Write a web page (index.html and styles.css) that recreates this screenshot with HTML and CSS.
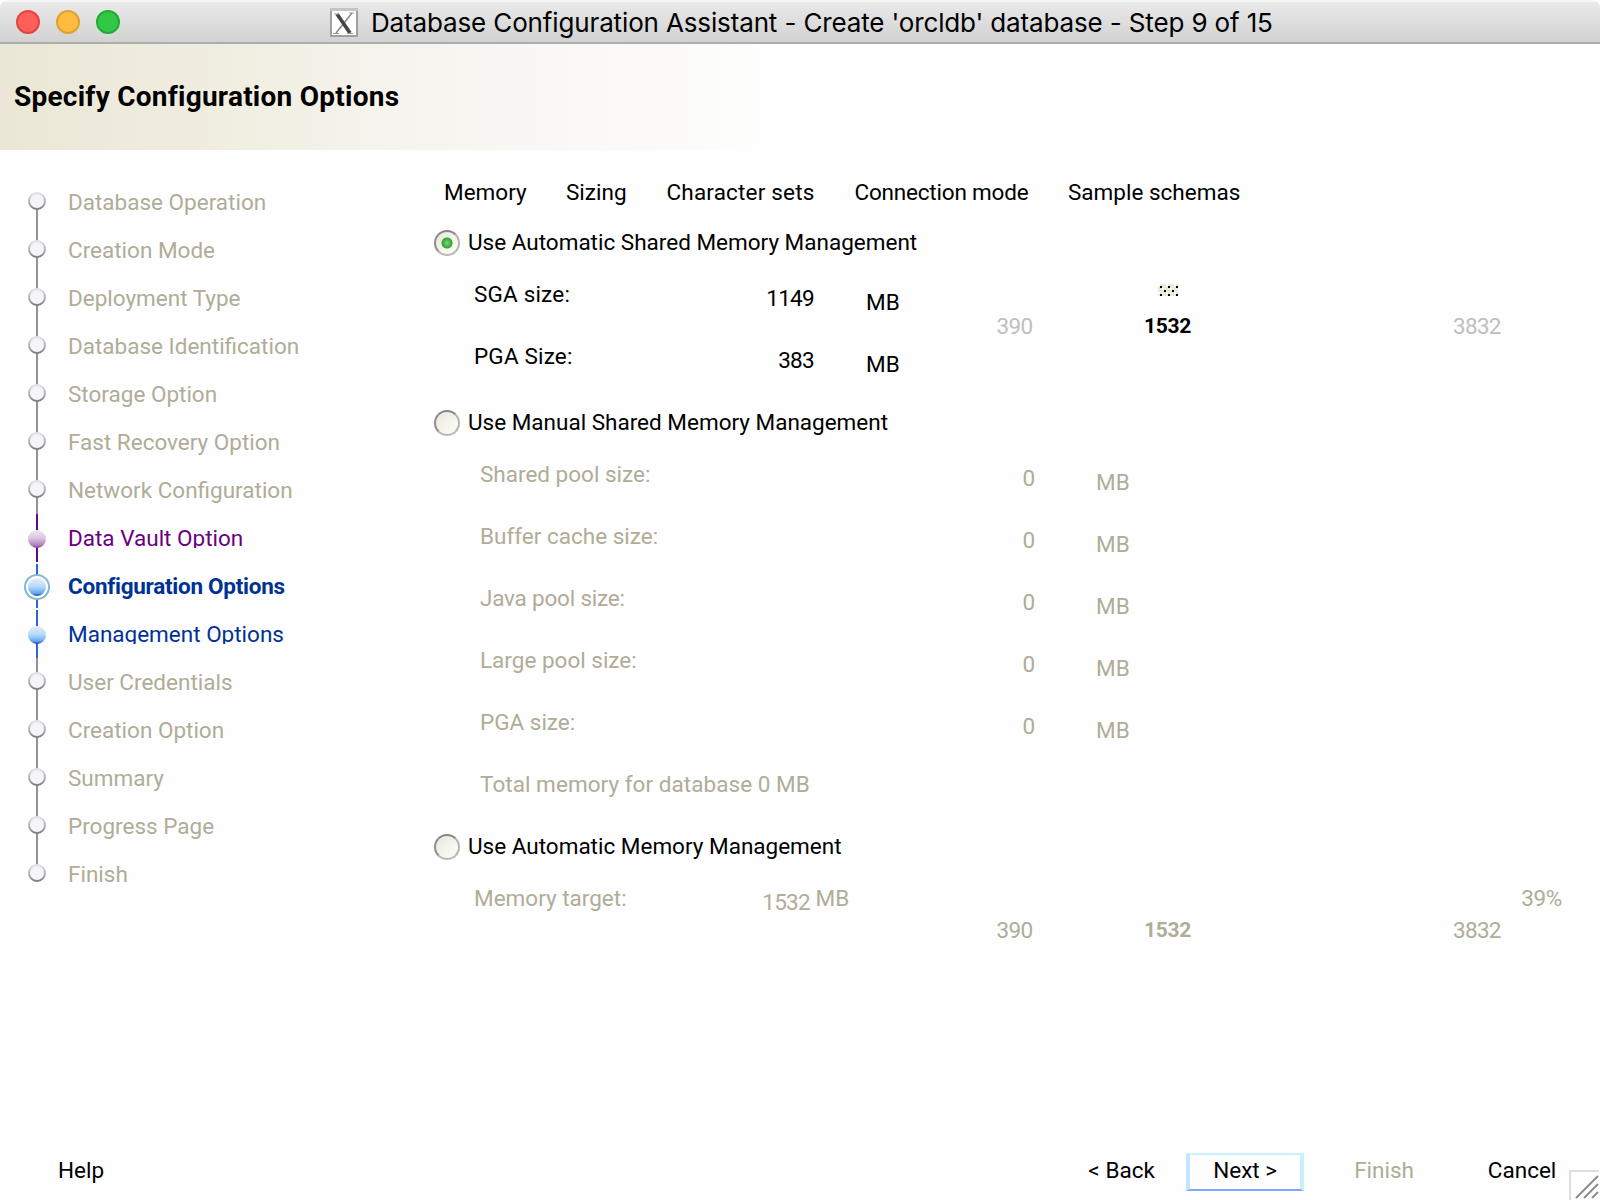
FILE: index.html
```html
<!DOCTYPE html>
<html lang="en">
<head>
<meta charset="utf-8">
<title>Database Configuration Assistant</title>
<link rel="stylesheet" href="styles.css">
</head>
<body>
<svg class="defs" aria-hidden="true">
  <defs>
    <linearGradient id="g-gray" x1="0" y1="0" x2="0" y2="1"><stop offset="0" stop-color="#e2e2e2"/><stop offset=".5" stop-color="#b8b8ba"/><stop offset="1" stop-color="#808085"/></linearGradient>
    <linearGradient id="g-purple" x1="0" y1="0" x2="0" y2="1"><stop offset="0" stop-color="#efe8f1"/><stop offset=".45" stop-color="#dcc6e0"/><stop offset=".85" stop-color="#b07cba"/><stop offset="1" stop-color="#6a4080"/></linearGradient>
    <linearGradient id="g-blue" x1="0" y1="0" x2="0" y2="1"><stop offset="0" stop-color="#e4effb"/><stop offset=".5" stop-color="#b4d8f8"/><stop offset=".85" stop-color="#5ea6f0"/><stop offset="1" stop-color="#1c3c9c"/></linearGradient>
    <symbol id="n-gray" viewBox="0 0 28 48"><circle cx="14" cy="24" r="8" fill="#f3f5f8" stroke="url(#g-gray)" stroke-width="2"/></symbol>
    <symbol id="n-purple" viewBox="0 0 28 48"><circle cx="14" cy="26" r="9" fill="url(#g-purple)"/></symbol>
    <symbol id="n-blue" viewBox="0 0 28 48"><circle cx="14" cy="26" r="9" fill="url(#g-blue)"/></symbol>
    <symbol id="n-active" viewBox="0 0 28 48"><circle cx="14" cy="26" r="12" fill="#fff" stroke="#86b8d0" stroke-width="2"/><circle cx="14" cy="26" r="9" fill="url(#g-blue)"/></symbol>
  </defs>
</svg>
<div class="window">
  <header class="titlebar">
    <div class="lights"><i class="light close"></i><i class="light minimize"></i><i class="light zoom"></i></div>
    <svg class="xicon" width="28" height="30" viewBox="0 0 28 30"><rect x="1" y="1" width="26" height="27" fill="#fff" stroke="#a0a0a0" stroke-width="2"/><rect x="0" y="0" width="28" height="3" fill="#c4c4c4"/><path d="M22 5 6 25" stroke="#888" stroke-width="1.5"/><path d="M7 6 20 25" stroke="#444" stroke-width="3.6"/><path d="M4 6h5M19 5h5M3 25.500h6M17 25.500h6" stroke="#999" stroke-width="1"/></svg>
    <span class="caption">Database Configuration Assistant - Create 'orcldb' database - Step 9 of 15</span>
  </header>
  <div class="banner"><h1>Specify Configuration Options</h1></div>
  <main class="body">
    <ol class="steps">
      <li><svg><path class="line" d="M14 24V48"/><use href="#n-gray"/></svg><span>Database Operation</span></li>
      <li><svg><path class="line" d="M14 0V48"/><use href="#n-gray"/></svg><span>Creation Mode</span></li>
      <li><svg><path class="line" d="M14 0V48"/><use href="#n-gray"/></svg><span>Deployment Type</span></li>
      <li><svg><path class="line" d="M14 0V48"/><use href="#n-gray"/></svg><span>Database Identification</span></li>
      <li><svg><path class="line" d="M14 0V48"/><use href="#n-gray"/></svg><span>Storage Option</span></li>
      <li><svg><path class="line" d="M14 0V48"/><use href="#n-gray"/></svg><span>Fast Recovery Option</span></li>
      <li><svg><path class="line" d="M14 0V49"/><use href="#n-gray"/></svg><span>Network Configuration</span></li>
      <li class="visited"><svg><path class="line" d="M14 1V49"/><use href="#n-purple"/></svg><span>Data Vault Option</span></li>
      <li class="active"><svg><path class="line" d="M14 3V47"/><use href="#n-active"/></svg><span>Configuration Options</span></li>
      <li class="next"><svg><path class="line" d="M14 1V49"/><use href="#n-blue"/></svg><span>Management Options</span></li>
      <li><svg><path class="line" d="M14 1V48"/><use href="#n-gray"/></svg><span>User Credentials</span></li>
      <li><svg><path class="line" d="M14 0V48"/><use href="#n-gray"/></svg><span>Creation Option</span></li>
      <li><svg><path class="line" d="M14 0V48"/><use href="#n-gray"/></svg><span>Summary</span></li>
      <li><svg><path class="line" d="M14 0V48"/><use href="#n-gray"/></svg><span>Progress Page</span></li>
      <li><svg><path class="line" d="M14 0V24"/><use href="#n-gray"/></svg><span>Finish</span></li>
    </ol>
    <section class="content">
      <nav class="tabs"><span>Memory</span><span>Sizing</span><span class="wide">Character sets</span><span class="tight">Connection mode</span><span>Sample schemas</span></nav>

      <label class="option"><i class="radio checked"></i>Use Automatic Shared Memory Management</label>
      <div class="group">
        <div class="fields shared">
          <div class="field"><span class="wide">SGA size:</span><span class="value">1149</span><span class="unit">MB</span></div>
          <div class="field"><span class="wide">PGA Size:</span><span class="value">383</span><span class="unit">MB</span></div>
        </div>
        <div class="slider">
          <svg class="thumb" width="20" height="12" viewBox="0 0 20 12"><path d="M0 0h20v12H0z" fill="#ece9d8"/><path d="M0 0h2v2H0zM8 0h2v2H8zM16 0h2v2h-2zM4 4h2v2H4zM12 4h2v2h-2zM0 8h2v2H0zM8 8h2v2H8zM16 8h2v2h-2z" fill="#fff"/><path d="M2 2h2v2H2zM10 2h2v2h-2zM18 2h2v2h-2zM6 6h2v2H6zM14 6h2v2h-2zM2 10h2v2H2zM10 10h2v2h-2zM18 10h2v2h-2z" fill="#000"/></svg>
          <div class="ticks"><span>390</span><b>1532</b><span>3832</span></div>
        </div>
      </div>

      <label class="option second"><i class="radio"></i>Use Manual Shared Memory Management</label>
      <div class="fields manual">
        <div class="field"><span>Shared pool size:</span><span class="value">0</span><span class="unit">MB</span></div>
        <div class="field"><span>Buffer cache size:</span><span class="value">0</span><span class="unit">MB</span></div>
        <div class="field"><span class="tight">Java pool size:</span><span class="value">0</span><span class="unit">MB</span></div>
        <div class="field"><span>Large pool size:</span><span class="value">0</span><span class="unit">MB</span></div>
        <div class="field"><span>PGA size:</span><span class="value">0</span><span class="unit">MB</span></div>
        <div class="total">Total memory for database 0 MB</div>
      </div>

      <label class="option third"><i class="radio"></i>Use Automatic Memory Management</label>
      <div class="group disabled">
        <div class="fields target">
          <div class="field"><span>Memory target:</span><span class="value">1532</span><span class="unit">MB</span></div>
        </div>
        <div class="slider">
          <div class="percent">39%</div>
          <div class="ticks"><span>390</span><b>1532</b><span>3832</span></div>
        </div>
      </div>
    </section>
  </main>
  <footer class="footer">
    <span class="btn help">Help</span>
    <div class="actions">
      <span class="btn">&lt; Back</span>
      <span class="btn focus">Next &gt;</span>
      <span class="btn off">Finish</span>
      <span class="btn">Cancel</span>
    </div>
    <svg class="grip" width="30" height="30" viewBox="0 0 30 30"><path d="M1 30V1H30" fill="none" stroke="#dedede" stroke-width="2"/><path d="M7 28 29 6M15 28 29 14M23 28 29 22" stroke="#8e8e8e" stroke-width="2"/></svg>
  </footer>
</div>
</body>
</html>
```

FILE: styles.css
```css
* { box-sizing: border-box; }
body { margin: 0; background: #fefefe; color: #000; font: 22.5px/24px Roboto, "Liberation Sans", sans-serif; }
.defs { position: absolute; width: 0; height: 0; }
.window { display: flex; flex-direction: column; width: 1600px; height: 1200px; overflow: hidden; white-space: nowrap; }
.wide { letter-spacing: .18px; }
.tight { letter-spacing: -.2px; }

.titlebar { display: flex; height: 44px; padding-left: 16px; background: linear-gradient(#f5f5f5 0 2px, #e9e9e9 2px, #d2d2d2 42px, #adadad 42px); border-radius: 8px 8px 0 0; }
.lights { display: flex; gap: 16px; width: 314px; padding-top: 10px; }
.light { width: 24px; height: 24px; border-radius: 50%; border: 2px solid; }
.close { background: #ff5f5a; border-color: #e2453f; }
.minimize { background: #febc40; border-color: #dfa032; }
.zoom { background: #33c748; border-color: #20ab32; }
.xicon { flex: none; margin-top: 8px; }
.caption { padding-left: 13px; font: 26px/46px Inter, sans-serif; letter-spacing: -.14px; }

.banner { height: 106px; padding: 39px 0 0 14px; background: linear-gradient(90deg, #ebe7d6, #f1eee2 240px, #f6f4ee 400px, #fefefe 780px); }
h1 { margin: 0; font-size: 28px; line-height: 28px; font-weight: 700; letter-spacing: .25px; }

.body { display: flex; flex: 1; min-height: 0; }
.steps { width: 434px; margin: 0; padding: 27px 0 0 23px; list-style: none; color: #afad98; }
.steps li { display: flex; height: 48px; }
.steps svg { width: 28px; height: 48px; overflow: visible; flex: none; }
.steps span { margin: 13px 0 0 17px; }
.line { stroke: #929297; stroke-width: 2; }
.visited { color: #6b0080; }
.visited .line { stroke: #5c0a8c; }
.active, .next { color: #003296; }
.active .line, .next .line { stroke: #3063d2; }
.active span { font-weight: 700; letter-spacing: -.27px; }
.visited span, .next span { height: 22px; overflow: hidden; }

.content { flex: 1; padding-top: 30px; }
.tabs { display: grid; grid-template-columns: 122px 100.500px 188px 213.500px auto; padding-left: 10px; }
.option { display: flex; gap: 8px; height: 26px; margin-top: 26px; }
.option.second { margin-top: 4px; }
.option.third { margin-top: 0; }
.radio { width: 26px; height: 26px; border: 2px solid; border-color: #858585 #b4b4b0 #b9b9b4 #8e8e8e; border-radius: 50%; background: linear-gradient(135deg, #eae7dc, #fdfdfa); }
.radio.checked { background: radial-gradient(circle at 11px 11px, #7fd67f 0, #2da52d 5px, #2da52d00 6px), linear-gradient(135deg, #eae7dc, #fdfdfa); }

.group { display: flex; margin-top: 26px; }
.fields { flex: none; }
.field { display: grid; height: 62px; }
.value { padding-top: 4px; text-align: right; letter-spacing: -.7px; }
.unit { padding-top: 8px; }
.shared { width: 561px; padding-left: 40px; }
.shared .field { grid-template-columns: 180px 160px 52px auto; }
.shared .unit { grid-column: 4; }
.manual { margin-top: 26px; padding-left: 46px; color: #afad98; }
.manual .field { grid-template-columns: 300px 254.500px 61.500px auto; }
.manual .unit { grid-column: 4; }
.total { height: 62px; letter-spacing: .05px; }
.target { width: 561px; padding-left: 40px; }
.target .field { grid-template-columns: 180px 156px auto; }
.target .unit { padding: 0 0 0 5.500px; }
.slider { width: 572px; }
.thumb { display: block; margin: 2px 0 18px 163px; }
.ticks { display: grid; grid-template-columns: 147.500px 309px auto; padding-left: 1.500px; color: #c0c0c0; letter-spacing: -.7px; }
.ticks b { padding-top: 1px; color: #000; font-size: 21px; line-height: 22px; letter-spacing: -.3px; }
.disabled, .disabled .ticks, .disabled b { color: #afad98; }
.percent { height: 32px; text-align: right; padding-right: 5px; letter-spacing: -.3px; }

.footer { display: flex; height: 50px; }
.btn { display: block; height: 40px; padding-top: 8px; text-align: center; }
.help { padding-left: 58px; }
.actions { display: flex; flex: none; margin-left: 953px; align-items: flex-start; }
.actions .btn { width: 129px; }
.actions .btn.focus { width: 118px; height: 38px; margin-top: 3px; padding-top: 4px; line-height: 23px; border: 2px solid #c9f1fd; border-left: 4px solid #c3e3ff; border-right-width: 4px; border-bottom-color: #7daaf4; }
.actions .off { width: 157px; padding-left: 3px; color: #afad98; }
.actions .off + .btn { width: 122px; }
.grip { margin: 20px 0 0 -14px; flex: none; }
```
